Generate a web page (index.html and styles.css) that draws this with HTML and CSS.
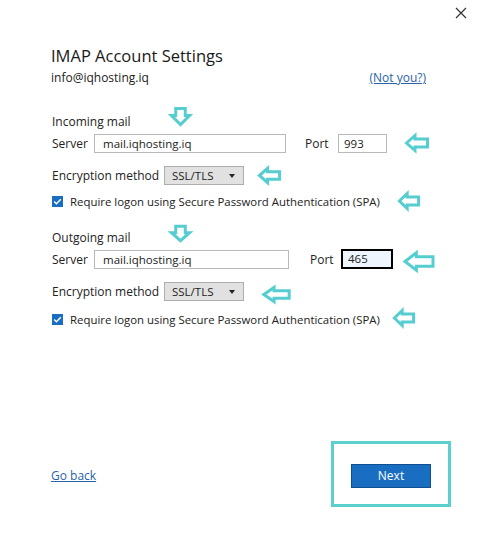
FILE: index.html
```html
<!DOCTYPE html>
<html>
<head>
<meta charset="utf-8">
<link rel="stylesheet" href="styles.css">
</head>
<body>
<div class="dialog">
  <div class="topbar">
    <svg class="close" width="12" height="12" viewBox="0 0 12 12"><path d="M1 1 L11 11 M11 1 L1 11" stroke="#333" stroke-width="1.2" fill="none"/></svg>
  </div>
  <div class="content">
    <h1 class="title">IMAP Account Settings</h1>
    <div class="account">
      <span>info@iqhosting.iq</span>
      <a class="link notyou" href="#">(Not you?)</a>
    </div>

    <section class="group incoming">
      <div class="group-title">
        <span>Incoming mail</span>
        <svg class="arrow down a-in-down" viewBox="0 0 22 20" preserveAspectRatio="none"><polygon points="6,1.5 16,1.5 16,9 20.5,9 11,18.5 1.5,9 6,9" vector-effect="non-scaling-stroke"/></svg>
      </div>
      <div class="row">
        <span class="lbl server-lbl">Server</span>
        <span class="field server-in">mail.iqhosting.iq</span>
        <span class="lbl port-lbl in">Port</span>
        <span class="field port-in">993</span>
        <svg class="arrow a-in-port" viewBox="0 0 24 18" preserveAspectRatio="none"><polygon points="1.5,9 10,1.5 10,5 22.5,5 22.5,13 10,13 10,16.5" vector-effect="non-scaling-stroke"/></svg>
      </div>
      <div class="row enc-row">
        <span class="lbl enc-lbl">Encryption method</span>
        <span class="select">SSL/TLS<span class="caret"></span></span>
        <svg class="arrow a-in-enc" viewBox="0 0 24 18" preserveAspectRatio="none"><polygon points="1.5,9 10,1.5 10,5 22.5,5 22.5,13 10,13 10,16.5" vector-effect="non-scaling-stroke"/></svg>
      </div>
      <div class="row check-row in">
        <span class="check"><svg width="11" height="11" viewBox="0 0 11 11"><path d="M2.2 5.6 L4.4 7.8 L8.8 3.2" stroke="#fff" stroke-width="1.4" fill="none"/></svg></span>
        <span class="check-text">Require logon using Secure Password Authentication (SPA)</span>
        <svg class="arrow a-in-spa" viewBox="0 0 24 18" preserveAspectRatio="none"><polygon points="1.5,9 10,1.5 10,5 22.5,5 22.5,13 10,13 10,16.5" vector-effect="non-scaling-stroke"/></svg>
      </div>
    </section>

    <section class="group outgoing">
      <div class="group-title">
        <span>Outgoing mail</span>
        <svg class="arrow down a-out-down" viewBox="0 0 22 20" preserveAspectRatio="none"><polygon points="6,1.5 16,1.5 16,9 20.5,9 11,18.5 1.5,9 6,9" vector-effect="non-scaling-stroke"/></svg>
      </div>
      <div class="row">
        <span class="lbl server-lbl">Server</span>
        <span class="field server-out">mail.iqhosting.iq</span>
        <span class="lbl port-lbl out">Port</span>
        <span class="field port-out">465</span>
        <svg class="arrow a-out-port" viewBox="0 0 24 18" preserveAspectRatio="none"><polygon points="1.5,9 10,1.5 10,5 22.5,5 22.5,13 10,13 10,16.5" vector-effect="non-scaling-stroke"/></svg>
      </div>
      <div class="row enc-row">
        <span class="lbl enc-lbl">Encryption method</span>
        <span class="select">SSL/TLS<span class="caret"></span></span>
        <svg class="arrow a-out-enc" viewBox="0 0 24 18" preserveAspectRatio="none"><polygon points="1.5,9 10,1.5 10,5 22.5,5 22.5,13 10,13 10,16.5" vector-effect="non-scaling-stroke"/></svg>
      </div>
      <div class="row check-row out">
        <span class="check"><svg width="11" height="11" viewBox="0 0 11 11"><path d="M2.2 5.6 L4.4 7.8 L8.8 3.2" stroke="#fff" stroke-width="1.4" fill="none"/></svg></span>
        <span class="check-text">Require logon using Secure Password Authentication (SPA)</span>
        <svg class="arrow a-out-spa" viewBox="0 0 24 18" preserveAspectRatio="none"><polygon points="1.5,9 10,1.5 10,5 22.5,5 22.5,13 10,13 10,16.5" vector-effect="non-scaling-stroke"/></svg>
      </div>
    </section>
  </div>

  <div class="footer">
    <a class="link goback" href="#">Go back</a>
    <div class="frame">
      <button class="next">Next</button>
    </div>
  </div>
</div>
</body>
</html>
```
FILE: styles.css
```css
html, body {
  margin: 0;
  padding: 0;
  background: #ffffff;
}
body {
  font-family: "Open Sans", "Noto Sans", sans-serif;
  font-size: 11.5px;
  color: #222222;
}
.dialog {
  width: 485px;
  height: 553px;
  display: flex;
  flex-direction: column;
  box-sizing: border-box;
}
.topbar {
  display: flex;
  justify-content: flex-end;
  height: 26px;
  padding: 7px 18px 0 0;
  box-sizing: border-box;
}
.close { display: block; }
.content {
  padding-left: 51px;
  padding-right: 30px;
}
.title {
  margin: 19px 0 0 0;
  font-size: 16.5px;
  font-weight: 400;
  line-height: 22px;
  color: #1a1a1a;
}
.account {
  display: flex;
  align-items: baseline;
  line-height: 16px;
  margin-top: 3px;
  font-size: 12px;
}
.link {
  color: #2a63a8;
  text-decoration: underline;
}
.notyou { margin-left: auto; margin-right: 29px; }

.group { margin-top: 25px; }
.outgoing { margin-top: 16px; }

.group-title {
  display: flex;
  align-items: center;
  height: 20px;
  font-size: 12px;
  padding-left: 1px;
}
.row {
  display: flex;
  align-items: center;
  height: 20px;
  margin-top: 2px;
  font-size: 12px;
  padding-left: 1px;
}
.lbl { flex: none; }
.server-lbl { width: 41px; }
.field {
  flex: none;
  box-sizing: border-box;
  height: 19px;
  border: 1px solid #b9b9b9;
  padding: 0 0 0 8px;
  line-height: 17px;
  background: #fff;
  font-size: 11.5px;
}
.server-in { width: 192px; margin-left: 1px; }
.server-out { width: 195px; margin-left: 1px; }
.port-lbl.in { margin-left: 19px; width: 33px; }
.port-lbl.out { margin-left: 21px; width: 31px; }
.port-in { width: 49px; padding-left: 5px; }
.port-out {
  width: 52px;
  height: 20px;
  border: 2px solid #000;
  background: #eef5fd;
  line-height: 16px;
  padding-left: 5px;
}
.enc-row { margin-top: 12px; }
.enc-lbl { width: 112px; }
.select {
  flex: none;
  box-sizing: border-box;
  position: relative;
  width: 80px;
  height: 19px;
  background: #e1e1e1;
  border: 1px solid #adadad;
  line-height: 17px;
  padding-left: 7px;
  font-size: 11.5px;
}
.caret {
  position: absolute;
  right: 8px;
  top: 7px;
  width: 0;
  height: 0;
  border-left: 3.5px solid transparent;
  border-right: 3.5px solid transparent;
  border-top: 4px solid #222;
}
.check-row.in { margin-top: 6px; }
.check-row.out { margin-top: 8px; }
.check {
  width: 11px;
  height: 11px;
  background: #1a6ec2;
  display: flex;
  flex: none;
  margin-right: 7px;
}
.check svg { display: block; }
.check-text { white-space: nowrap; font-size: 11.4px; flex: none; }

.arrow {
  display: block;
  flex: none;
  overflow: visible;
}
.arrow polygon {
  fill: #ffffff;
  stroke: #56cdd0;
  stroke-width: 3;
  stroke-linejoin: miter;
}
.a-in-down { width: 21px; height: 19px; margin-left: 39px; margin-top: -10px; }
.a-out-down { width: 21px; height: 17px; margin-left: 39px; margin-top: -8px; }
.a-in-port { width: 24px; height: 18px; margin-left: 18px; }
.a-out-port { width: 32px; height: 21px; margin-left: 10px; margin-top: 4px; }
.a-in-enc { width: 23px; height: 17px; margin-left: 14px; }
.a-out-enc { width: 29px; height: 17px; margin-left: 18px; margin-top: 6px; }
.a-in-spa { width: 22px; height: 18px; margin-left: 18px; }
.a-out-spa { width: 22px; height: 18px; margin-left: 13px; margin-top: -3px; }

.footer {
  margin-top: auto;
  margin-bottom: 46px;
  display: flex;
  align-items: center;
  padding-left: 51px;
}
.goback {
  font-size: 12px;
  margin-top: 2px;
}
.frame {
  margin-left: auto;
  margin-right: 34px;
  width: 120px;
  height: 66px;
  box-sizing: border-box;
  border: 3px solid #5ccfcf;
  display: flex;
  align-items: center;
  justify-content: center;
}
.next {
  width: 80px;
  height: 24px;
  background: #1a6ec2;
  border: 1px solid #0f4f8f;
  color: #ffffff;
  font-family: "Open Sans", "Noto Sans", sans-serif;
  font-size: 12px;
  padding: 0;
  margin-top: 3px;
}
```
